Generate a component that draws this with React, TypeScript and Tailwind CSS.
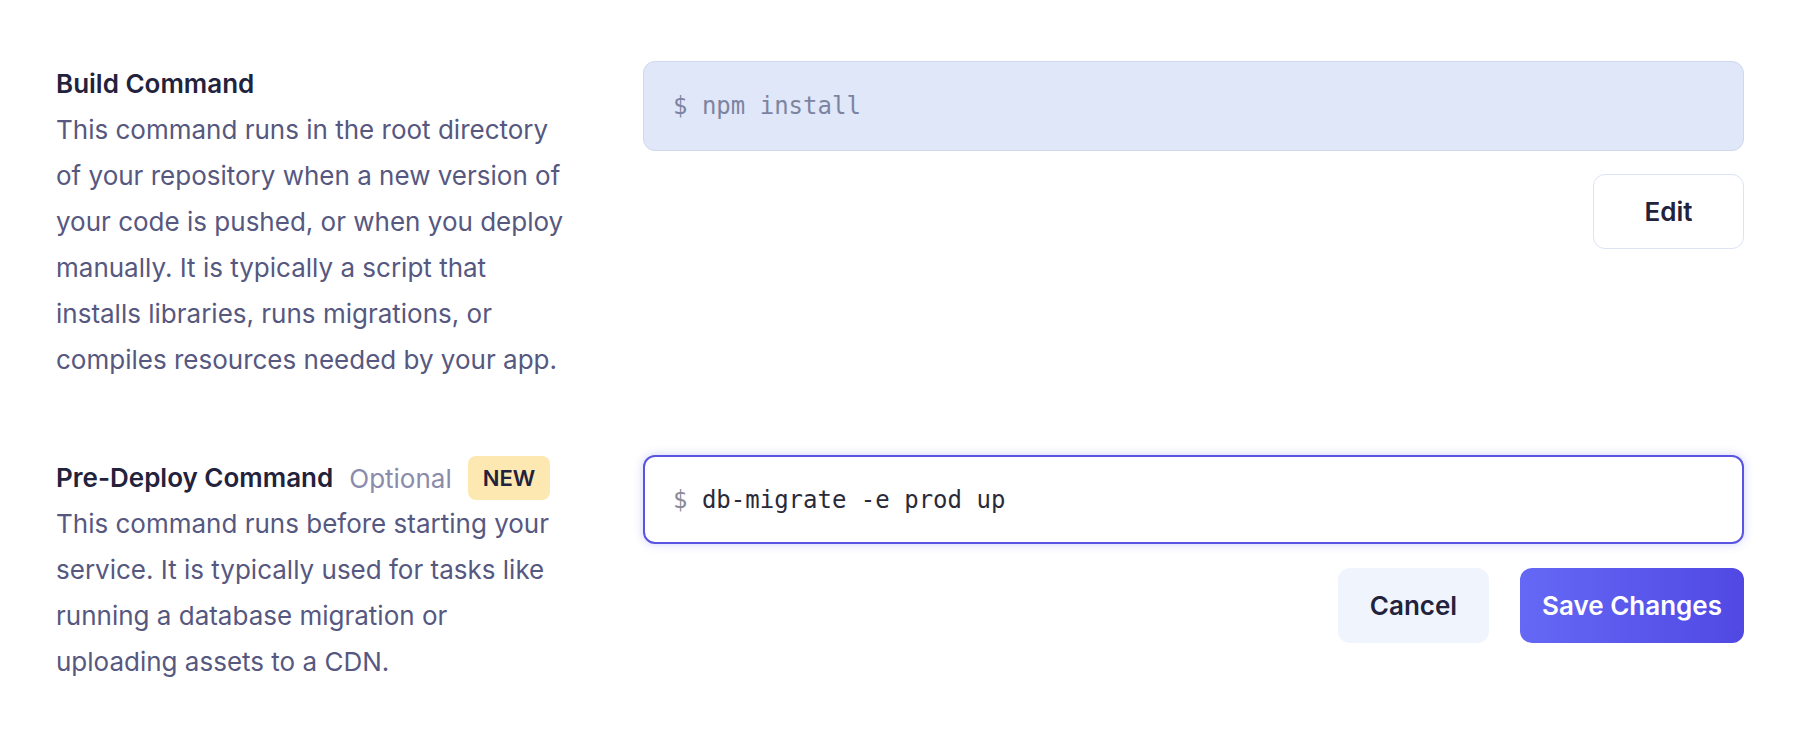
import React from "react";

const sans = "font-['Inter','Liberation_Sans',sans-serif]";
const mono = "font-['DejaVu_Sans_Mono','Liberation_Mono',monospace]";

function App() {
  return (
    <div className={`min-h-screen w-full bg-white px-[56px] pt-[61px] ${sans}`}>
      {/* Build command */}
      <section className="grid grid-cols-[587px_1fr]">
        <div className="w-[512px]">
          <h3 className="text-[26px] leading-[46px] font-semibold text-[#23223d]">
            Build Command
          </h3>
          <p className="text-[26px] leading-[46px] text-[#56587f]">
            This command runs in the root directory of your repository when a
            new version of your code is pushed, or when you deploy manually. It
            is typically a script that installs libraries, runs migrations, or
            compiles resources needed by your app.
          </p>
        </div>
        <div className="flex flex-col">
          <div className="flex h-[90px] items-center rounded-[12px] border border-[#cfd8ef] bg-[#e0e7f8] px-[29px]">
            <span className={`text-[24px] text-[#7d84a1] ${mono}`}>
              $ npm install
            </span>
          </div>
          <button className="mt-[23px] h-[75px] w-[151px] self-end rounded-[12px] border border-[#dce3f3] bg-white text-[26px] font-semibold text-[#23223d]">
            Edit
          </button>
        </div>
      </section>

      {/* Pre-deploy command */}
      <section className="mt-[72px] grid grid-cols-[587px_1fr]">
        <div className="w-[512px]">
          <div className="flex h-[46px] items-center gap-4">
            <h3 className="text-[26px] leading-[46px] font-semibold text-[#23223d]">
              Pre-Deploy Command
            </h3>
            <span className="text-[26px] text-[#8b8bab]">Optional</span>
            <span className="flex h-[44px] items-center rounded-[8px] bg-[#fde8b2] px-[15px] text-[22px] font-semibold text-[#23223d]">
              NEW
            </span>
          </div>
          <p className="text-[26px] leading-[46px] text-[#56587f]">
            This command runs before starting your service. It is typically
            used for tasks like running a database migration or uploading
            assets to a CDN.
          </p>
        </div>
        <div className="flex flex-col">
          <div className="flex h-[89px] items-center rounded-[12px] border-2 border-[#5a54e2] bg-white px-[28px] shadow-[0_0_10px_rgba(99,102,241,0.3)]">
            <span className={`text-[24px] ${mono}`}>
              <span className="text-[#8a8a99]">$</span>{" "}
              <span className="text-[#2a2a38]">db-migrate -e prod up</span>
            </span>
          </div>
          <div className="mt-[24px] flex justify-end gap-[31px]">
            <button className="h-[75px] w-[151px] rounded-[12px] bg-[#eff4fd] text-[26px] font-semibold text-[#23223d]">
              Cancel
            </button>
            <button className="h-[75px] w-[224px] rounded-[12px] bg-linear-to-r from-[#6568f5] to-[#5148e3] text-[26px] font-semibold text-white">
              Save Changes
            </button>
          </div>
        </div>
      </section>
    </div>
  );
}

export default App;
